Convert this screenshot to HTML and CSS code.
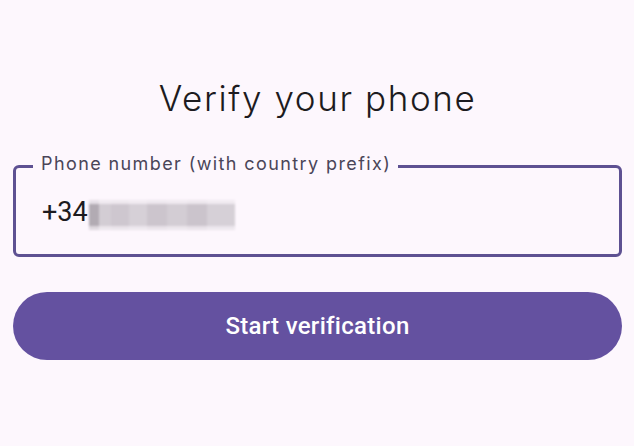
FILE: index.html
```html
<!DOCTYPE html>
<html lang="en">
<head>
<meta charset="utf-8">
<title>Verify your phone</title>
<link rel="stylesheet" href="styles.css">
</head>
<body>
<main class="screen">
  <h1 class="title">Verify your phone</h1>
  <fieldset class="field">
    <legend class="field-label">Phone number (with country prefix)</legend>
    <div class="field-value"><span class="prefix">+34</span><span class="redacted" aria-hidden="true"></span></div>
  </fieldset>
  <button class="primary-btn" type="button">Start verification</button>
</main>
</body>
</html>
```

FILE: styles.css
```css
html, body {
  margin: 0;
  padding: 0;
  background: #fdf7fd;
  height: 100%;
}

.screen {
  box-sizing: border-box;
  padding: 78px 12px 0 13px;
  font-family: Roboto, "Noto Sans", sans-serif;
  display: flex;
  flex-direction: column;
}

.title {
  margin: 0;
  font-family: Inter, Roboto, sans-serif;
  font-size: 35px;
  line-height: 40px;
  font-weight: 300;
  letter-spacing: 1.6px;
  color: #1d1b20;
  text-align: center;
}

.field {
  margin: 36px 0 0 0;
  min-width: 0;
  border: 3px solid #5e5192;
  border-radius: 6px;
  padding: 17px 17px 26px 17px;
}

.field-label {
  padding: 0 7px 5px 8px;
  font-family: Inter, Roboto, sans-serif;
  font-size: 18px;
  line-height: 20px;
  letter-spacing: 1.4px;
  color: #4a4558;
}

.field-value {
  display: flex;
  align-items: center;
  padding-left: 9px;
  height: 32px;
  font-size: 27px;
  line-height: 32px;
  color: #1d1b20;
}

.redacted {
  width: 146px;
  height: 30px;
  margin-left: 1px;
  margin-top: 6px;
  background:
    linear-gradient(to bottom, rgba(253,247,253,0.7) 0 4px, transparent 4px 26px, rgba(253,247,253,0.6) 26px),
    linear-gradient(to right, #b2abb3 0 10px, #d3cdd4 10px 22px, #cec7cf 22px 40px, #d6d0d7 40px 58px, #ccc5cd 58px 78px, #d3cdd4 78px 98px, #cbc4cc 98px 118px, #d6d0d7 118px 146px);
  filter: blur(1px);
}

.primary-btn {
  margin-top: 35px;
  height: 68px;
  border: none;
  border-radius: 34px;
  background: #6451a0;
  color: #ffffff;
  font-family: Roboto, "Noto Sans", sans-serif;
  font-size: 24px;
  font-weight: 500;
  letter-spacing: 0.3px;
  display: flex;
  align-items: center;
  justify-content: center;
  padding: 0;
}
```
